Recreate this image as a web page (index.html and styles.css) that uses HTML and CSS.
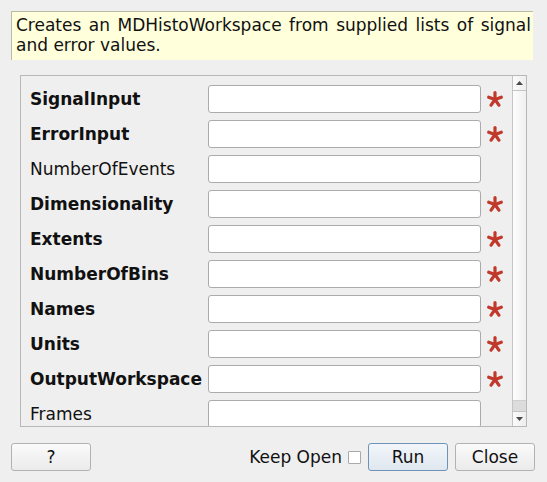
FILE: index.html
```html
<!DOCTYPE html>
<html>
<head>
<meta charset="utf-8">
<title>CreateMDHistoWorkspace</title>
<link rel="stylesheet" href="styles.css">
</head>
<body>
<svg class="defs" width="0" height="0" aria-hidden="true">
  <symbol id="ast" viewBox="0 0 16 16">
    <g stroke="#c0392b" stroke-width="3.2" stroke-linecap="round" fill="none">
      <line x1="8" y1="8.5" x2="8" y2="1.6"/>
      <line x1="8" y1="8.5" x2="14.3" y2="6.2"/>
      <line x1="8" y1="8.5" x2="11.9" y2="14.2"/>
      <line x1="8" y1="8.5" x2="4.1" y2="14.2"/>
      <line x1="8" y1="8.5" x2="1.7" y2="6.2"/>
    </g>
  </symbol>
</svg>
<div class="dialog">
  <div class="desc">Creates an MDHistoWorkspace from supplied lists of signal and error values.</div>
  <div class="scrollarea">
    <div class="rows">
      <div class="row"><span class="label req">SignalInput</span><span class="field"></span><span class="star"><svg width="16" height="16"><use href="#ast"/></svg></span></div>
      <div class="row"><span class="label req">ErrorInput</span><span class="field"></span><span class="star"><svg width="16" height="16"><use href="#ast"/></svg></span></div>
      <div class="row"><span class="label">NumberOfEvents</span><span class="field"></span><span class="star"></span></div>
      <div class="row"><span class="label req">Dimensionality</span><span class="field"></span><span class="star"><svg width="16" height="16"><use href="#ast"/></svg></span></div>
      <div class="row"><span class="label req">Extents</span><span class="field"></span><span class="star"><svg width="16" height="16"><use href="#ast"/></svg></span></div>
      <div class="row"><span class="label req">NumberOfBins</span><span class="field"></span><span class="star"><svg width="16" height="16"><use href="#ast"/></svg></span></div>
      <div class="row"><span class="label req">Names</span><span class="field"></span><span class="star"><svg width="16" height="16"><use href="#ast"/></svg></span></div>
      <div class="row"><span class="label req">Units</span><span class="field"></span><span class="star"><svg width="16" height="16"><use href="#ast"/></svg></span></div>
      <div class="row"><span class="label req">OutputWorkspace</span><span class="field"></span><span class="star"><svg width="16" height="16"><use href="#ast"/></svg></span></div>
      <div class="row"><span class="label">Frames</span><span class="field"></span><span class="star"></span></div>
    </div>
    <div class="scrollbar">
      <div class="sb-btn sb-up"><svg width="7" height="4" viewBox="0 0 7 4"><path d="M0 4 L3.5 0 L7 4 Z" fill="#4a4a4a"/></svg></div>
      <div class="sb-thumb"></div>
      <div class="sb-trough"></div>
      <div class="sb-btn sb-down"><svg width="7" height="4" viewBox="0 0 7 4"><path d="M0 0 L3.5 4 L7 0 Z" fill="#4a4a4a"/></svg></div>
    </div>
  </div>
  <div class="buttons">
    <button class="btn">?</button>
    <span class="spacer"></span>
    <span class="keep">Keep Open</span>
    <span class="check"></span>
    <button class="btn btn-default">Run</button>
    <button class="btn">Close</button>
  </div>
</div>
</body>
</html>
```
FILE: styles.css
```css
html, body {
  margin: 0;
  padding: 0;
  background: #efefef;
}
body {
  font-family: "DejaVu Sans", "Liberation Sans", sans-serif;
  font-size: 17px;
  color: #111;
  width: 547px;
  height: 482px;
  overflow: hidden;
}
.defs {
  position: absolute;
  width: 0;
  height: 0;
}
.dialog {
  padding-top: 11px;
}
.desc {
  margin: 0 14px 0 11px;
  box-sizing: border-box;
  height: 49px;
  padding: 3px 2px 0 4px;
  line-height: 20px;
  text-align: justify;
  background: #ffffdc;
  border-top: 1px solid #b9b9a6;
  border-left: 1px solid #b9b9a6;
  color: #111;
}
.scrollarea {
  margin: 15px 20px 0 20px;
  box-sizing: border-box;
  height: 352px;
  border: 1px solid #b8b8b8;
  display: flex;
  overflow: hidden;
}
.rows {
  flex: 1;
  padding: 9px 0 0 9px;
  display: flex;
  flex-direction: column;
  gap: 7px;
  overflow: hidden;
}
.row {
  display: flex;
  align-items: center;
  height: 28px;
  flex: none;
}
.label {
  width: 178px;
  flex: none;
  white-space: nowrap;
}
.label.req {
  font-weight: bold;
}
.field {
  width: 273px;
  height: 28px;
  box-sizing: border-box;
  flex: none;
  background: #fff;
  border: 1px solid #ababab;
  border-radius: 3px;
}
.star {
  width: 31px;
  flex: none;
  display: flex;
  align-items: center;
  padding-left: 6px;
  box-sizing: border-box;
}
.star svg {
  display: block;
}
.scrollbar {
  width: 14px;
  flex: none;
  box-sizing: border-box;
  border-left: 1px solid #c4c4c4;
  display: flex;
  flex-direction: column;
}
.sb-btn {
  height: 14px;
  flex: none;
  display: flex;
  align-items: center;
  justify-content: center;
  background: linear-gradient(to right, #fbfbfb, #eeeeee);
}
.sb-up {
  border-bottom: 1px solid #c4c4c4;
}
.sb-down {
  border-top: 1px solid #c4c4c4;
}
.sb-thumb {
  flex: 1;
  background: linear-gradient(to right, #fdfdfd, #f0f0f0);
  border-bottom: 1px solid #cfcfcf;
}
.sb-trough {
  height: 10px;
  flex: none;
  background: #dcdcdc;
}
.buttons {
  margin: 16px 12px 0 11px;
  display: flex;
  align-items: center;
}
.btn {
  font-family: "DejaVu Sans", "Liberation Sans", sans-serif;
  font-size: 17px;
  color: #111;
  width: 80px;
  height: 28px;
  box-sizing: border-box;
  border: 1px solid #b2b2b2;
  border-radius: 3px;
  background: linear-gradient(to bottom, #fafafa, #ebebeb);
  padding: 0;
  margin: 0;
}
.btn-default {
  border-color: #6f93b6;
  background: linear-gradient(to bottom, #f2f6fa, #dfe7ef);
  margin-right: 7px;
}
.spacer {
  flex: 1;
}
.keep {
  white-space: nowrap;
}
.check {
  width: 13px;
  height: 13px;
  box-sizing: border-box;
  border: 1px solid #a9a9a9;
  background: #fff;
  margin: 0 7px 0 6px;
  border-radius: 1px;
}
```
